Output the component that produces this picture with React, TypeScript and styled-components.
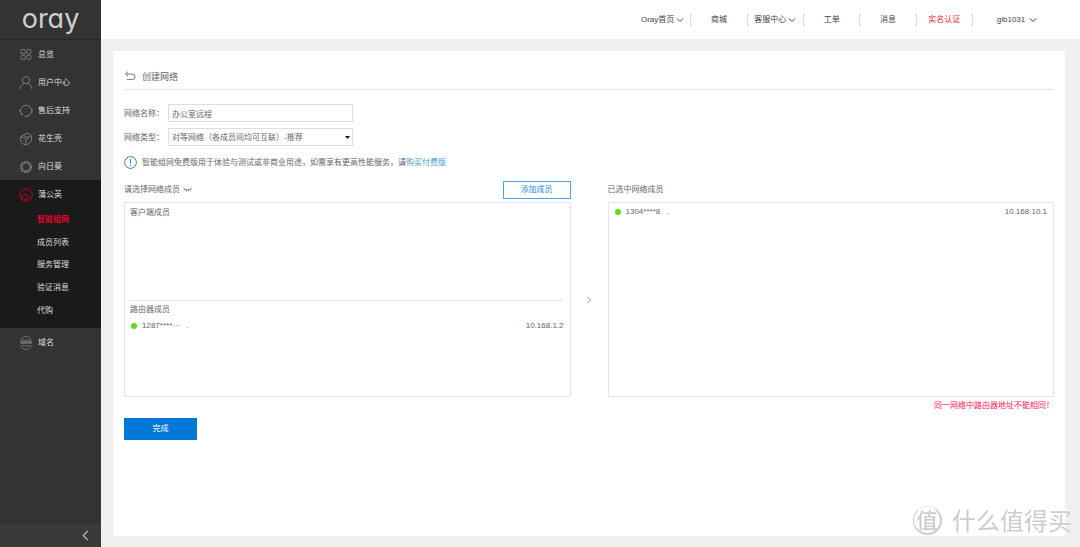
import React from 'react';
import styled, { createGlobalStyle } from 'styled-components';

const GlobalStyle = createGlobalStyle`
  * { box-sizing: border-box; }
  body {
    margin: 0;
    background: #f0f0f0;
    color: #666;
    font: 8px/12px "Liberation Sans", "Noto Sans CJK SC", sans-serif;
  }
  button, input, select { font: inherit; color: inherit; margin: 0; }
  a { color: inherit; text-decoration: none; }
  ul { list-style: none; margin: 0; padding: 0; }
  h1, h2, h3, p { margin: 0; font: inherit; }
  svg { display: block; flex: none; }
`;

const Shell = styled.div`
  display: flex;
  min-height: 100vh;
`;

const Sidebar = styled.aside`
  display: flex;
  flex-direction: column;
  flex: none;
  width: 101px;
  background: #333;
  color: #ddd;
`;

const Logo = styled.a`
  height: 40px;
  border-bottom: 1px solid #262626;
  text-align: center;
  font: 400 27px/38px Inter, sans-serif;
  font-feature-settings: "cv11";
  && { color: #d0d0d0; }
`;

const SideLink = styled.a`
  display: flex;
  align-items: center;
  gap: 5px;
  height: 28px;
  padding: 1px 0 0 19px;
`;

const ActiveGroup = styled.li`
  background: #1a1a1a;
  padding-bottom: 7px;
`;

const SubMenu = styled.ul`
  display: flex;
  flex-direction: column;
  height: 113px;
`;

const SubItem = styled.li<{ $active?: boolean }>`
  display: flex;
  flex: 1;
  align-items: center;
  padding: 2px 0 0 37px;
  color: ${(p) => (p.$active ? '#e0002d' : '#ddd')};
  font-weight: ${(p) => (p.$active ? 700 : 400)};
`;

const Collapse = styled.button`
  display: flex;
  align-items: center;
  justify-content: flex-end;
  height: 23px;
  margin-top: auto;
  padding: 0 11px;
  border: 0;
  background: #3a3a3a;
  && { color: #bbb; }
`;

const Main = styled.div`
  display: flex;
  flex: 1;
  flex-direction: column;
  min-width: 0;
`;

const Header = styled.header`
  display: flex;
  justify-content: flex-end;
  align-items: center;
  height: 39px;
  padding: 1px 19px 0 0;
  background: #fff;
  color: #444;
`;

const Nav = styled.nav`
  display: grid;
  grid-template-columns: repeat(6, 1fr);
  width: 338px;
`;

const NavLink = styled.a<{ $alert?: boolean }>`
  display: flex;
  align-items: center;
  justify-content: center;
  gap: 2px;
  height: 12px;
  border-right: 1px solid #ddd;
  white-space: nowrap;
  && { color: ${(p) => (p.$alert ? '#f5222d' : '#444')}; }
`;

const Account = styled.button`
  display: flex;
  align-items: center;
  justify-content: center;
  gap: 4px;
  width: 88px;
  height: 12px;
  padding: 0;
  border: 0;
  background: none;
`;

const Panel = styled.main`
  flex: 1;
  margin: 12px 15px 11px 12px;
  padding: 0 11px;
  background: #fff;
`;

const TitleBar = styled.div`
  display: flex;
  align-items: center;
  gap: 6px;
  height: 39px;
  padding-top: 13px;
  border-bottom: 1px solid #e6e6e6;
  font-size: 9px;
`;

const IconButton = styled.button`
  padding: 0;
  border: 0;
  background: none;
`;

const Form = styled.form`
  display: grid;
  gap: 6px;
  margin-top: 14px;
`;

const Field = styled.div`
  display: flex;
  align-items: center;
`;

const Label = styled.label`
  width: 44px;
  padding-top: 2px;
`;

const TextBox = styled.input`
  width: 185px;
  height: 18px;
  padding: 0 3px;
  border: 1px solid #ddd;
  background: #fff;
`;

const SelectWrap = styled.div`
  display: grid;
  align-items: center;
  width: 185px;
  & > * { grid-area: 1 / 1; }
  & > svg { justify-self: end; margin-right: 3px; pointer-events: none; }
`;

const Select = styled.select`
  appearance: none;
  width: 100%;
  height: 18px;
  padding: 1px 3px 0;
  border: 1px solid #ddd;
  border-radius: 0;
  background: #fff;
`;

const Notice = styled.p`
  display: flex;
  align-items: center;
  gap: 5px;
  margin-top: 10px;
`;

const BlueLink = styled.a`
  && { color: #4a98d9; }
`;

const Picker = styled.div`
  display: grid;
  grid-template-columns: 1fr 37px 1fr;
  margin-top: 11px;
`;

const ColumnHead = styled.div`
  display: flex;
  align-items: center;
  gap: 3px;
  height: 22px;
  padding-bottom: 3px;
`;

const AddButton = styled.button`
  width: 68px;
  height: 18px;
  margin-left: auto;
  padding: 0;
  border: 1px solid #4aa0e6;
  background: #fff;
  && { color: #2b8ade; }
`;

const Box = styled.div`
  height: 195px;
  border: 1px solid #e6e6e6;
  padding: 1px 6px 1px 5px;
`;

const Section = styled.section`
  & + & { border-top: 1px solid #e6e6e6; }
  &:first-child:not(:last-child) { height: 96px; }
`;

const SectionTitle = styled.h3`
  height: 17px;
  line-height: 17px;
`;

const Member = styled.div`
  display: flex;
  align-items: center;
  height: 16px;
  padding-left: 1px;
`;

const Dot = styled.span`
  width: 6px;
  height: 6px;
  margin-right: 5px;
  border-radius: 50%;
  background: #5fdb1f;
`;

const Masked = styled.span`
  margin-right: 6px;
  white-space: nowrap;
`;

const Address = styled.span`
  margin-left: auto;
`;

const Arrow = styled.div`
  display: flex;
  align-items: center;
  justify-content: center;
  padding-top: 7px;
  color: #999;
`;

const ErrorText = styled.p`
  margin-top: 3px;
  text-align: right;
  color: #ff1a55;
`;

const Submit = styled.button`
  display: block;
  width: 73px;
  height: 22px;
  margin-top: 6px;
  padding: 0;
  border: 1px solid #0078d7;
  background: #0078d7;
  && { color: #fff; }
`;

const Watermark = styled.div`
  position: fixed;
  right: 8px;
  bottom: 10px;
  display: flex;
  align-items: center;
  gap: 10px;
  color: #ccc;
  font: 24px/34px "Noto Sans CJK SC", sans-serif;
  text-shadow: -1px -1px 0 #fff;
  white-space: nowrap;
  pointer-events: none;
`;

const Seal = styled.span`
  width: 29px;
  height: 29px;
  border: 1px solid #ccc;
  border-right-width: 2px;
  border-bottom-width: 2px;
  border-top-color: #eee;
  border-radius: 50%;
  font-size: 21px;
  font-weight: 500;
  line-height: 24px;
  text-align: center;
`;

type ChevronProps = { dir?: 'down' | 'left' | 'right'; size?: number };

const chevrons = { down: 'M1 2.5 4 5.5 7 2.5', left: 'M6 0 2 4 6 8', right: 'M2.5 1 5.5 4 2.5 7' };

const Chevron = ({ dir = 'down', size = 8 }: ChevronProps) => (
  <svg width={size} height={size} viewBox="0 0 8 8" fill="none" stroke="currentColor" overflow="visible">
    <path d={chevrons[dir]} />
  </svg>
);

const Glyph = ({ children, color = '#808080' }: { children: React.ReactNode; color?: string }) => (
  <svg width="14" height="14" viewBox="0 0 14 14" fill="none" stroke={color} strokeWidth="0.9">
    {children}
  </svg>
);

const GridIcon = () => (
  <Glyph>
    <rect x="2" y="1.5" width="4.2" height="4.2" rx="1" />
    <rect x="7.7" y="1.5" width="4.2" height="4.2" rx="1" />
    <rect x="2" y="7.2" width="4.2" height="4.2" rx="1" />
    <rect x="7.7" y="7.2" width="4.2" height="4.2" rx="1" />
  </Glyph>
);

const UserIcon = () => (
  <Glyph>
    <circle cx="7" cy="4.2" r="3.6" />
    <path d="M1 13.2c0-3 2-5 4.2-5.8M13 13.2c0-3-2-5-4.2-5.8" />
  </Glyph>
);

const HeadsetIcon = () => (
  <Glyph>
    <path d="M1.8 5.2a5.4 5.4 0 0 1 10.4 0M12.4 8a5.6 5.6 0 0 1-4.2 4.2" />
    <path d="M1.3 5.1v3.4M12.8 4.8v3.6M3.6 11.2 2 9M5.8 12.4h2.6" strokeWidth="1.3" />
  </Glyph>
);

const CubeIcon = () => (
  <Glyph>
    <path d="M1.4 5 8 1.2Q12.4 2.2 12.7 5.2q.3 4.6-2.3 6.2L6.4 13Q1 11.6 1.4 5Z" />
    <path d="M1.4 5Q5 5.6 7.2 7.2L12.5 3.8M7.2 7.2 6.6 13M4.2 3.5 9.6 5.6" />
  </Glyph>
);

const SunflowerIcon = () => (
  <Glyph>
    <circle cx="7" cy="7" r="4" strokeWidth="0.8" />
    <circle cx="7" cy="7" r="5.3" strokeWidth="1.6" strokeDasharray="1.9 0.88" />
  </Glyph>
);

const DandelionIcon = () => (
  <Glyph color="#d8002d">
    <circle cx="7" cy="7" r="6.2" />
    <path d="M4.6 12.2A3 3 0 1 1 9 9.2c0 1.4-.9 2.2-2.2 2.2-1 0-1.6-.6-1.6-1.4" />
  </Glyph>
);

const DomainIcon = () => (
  <Glyph>
    <path d="M1.4 4.2a6 6 0 0 1 11.2 0M1.4 9.8a6 6 0 0 0 11.2 0M2 4.2h10M2 9.8h10" strokeWidth="0.7" />
    <text x="7" y="8.2" textAnchor="middle" fontSize="5" fontWeight="700" fill="#909090" stroke="none">www</text>
  </Glyph>
);

const sideItems = [
  { label: '总览', Icon: GridIcon },
  { label: '用户中心', Icon: UserIcon },
  { label: '售后支持', Icon: HeadsetIcon },
  { label: '花生壳', Icon: CubeIcon },
  { label: '向日葵', Icon: SunflowerIcon },
];

const subItems = ['智能组网', '成员列表', '服务管理', '验证消息', '代购'];

const navItems = [
  { label: 'Oray首页', menu: true },
  { label: '商城' },
  { label: '客服中心', menu: true },
  { label: '工单' },
  { label: '消息' },
  { label: '实名认证', alert: true },
];

export default function App() {
  return (
    <>
      <GlobalStyle />
      <Shell>
        <Sidebar>
          <Logo href="#">oray</Logo>
          <ul>
            {sideItems.map(({ label, Icon }) => (
              <li key={label}>
                <SideLink href="#"><Icon />{label}</SideLink>
              </li>
            ))}
            <ActiveGroup>
              <SideLink href="#"><DandelionIcon />蒲公英</SideLink>
              <SubMenu>
                {subItems.map((label, i) => (
                  <SubItem key={label} $active={i === 0}><a href="#">{label}</a></SubItem>
                ))}
              </SubMenu>
            </ActiveGroup>
            <li><SideLink href="#"><DomainIcon />域名</SideLink></li>
          </ul>
          <Collapse aria-label="收起"><Chevron dir="left" size={9} /></Collapse>
        </Sidebar>
        <Main>
          <Header>
            <Nav>
              {navItems.map(({ label, menu, alert }) => (
                <NavLink key={label} href="#" $alert={alert}>
                  {label}{menu && <Chevron />}
                </NavLink>
              ))}
            </Nav>
            <Account>glb1031<Chevron /></Account>
          </Header>
          <Panel>
            <TitleBar>
              <IconButton aria-label="返回">
                <svg width="12" height="12" viewBox="0 0 12 12" fill="none" stroke="#777" strokeWidth="1">
                  <path d="M2 3h6.2a2.8 2.8 0 0 1 0 5.6H3" />
                  <path d="M4 .6 1.5 3 4 5.4" />
                </svg>
              </IconButton>
              <h1>创建网络</h1>
            </TitleBar>
            <Form>
              <Field>
                <Label htmlFor="name">网络名称：</Label>
                <TextBox id="name" defaultValue="办公室远程" />
              </Field>
              <Field>
                <Label htmlFor="type">网络类型：</Label>
                <SelectWrap>
                  <Select id="type">
                    <option>对等网络（各成员间均可互联）-推荐</option>
                  </Select>
                  <svg width="5" height="3" viewBox="0 0 5 3"><path d="M0 0h5L2.5 3Z" fill="#111" /></svg>
                </SelectWrap>
              </Field>
            </Form>
            <Notice>
              <svg width="13" height="13" viewBox="0 0 13 13" fill="none" stroke="#3f7fcf">
                <circle cx="6.5" cy="6.5" r="5.9" />
                <path d="M6.5 3v4.5M6.5 8.7v1.2" />
              </svg>
              <span>智能组网免费版用于体验与测试或非商业用途，如需享有更高性能服务，请<BlueLink href="#">购买付费版</BlueLink></span>
            </Notice>
            <Picker>
              <div>
                <ColumnHead>
                  <h2>请选择网络成员</h2>
                  <IconButton aria-label="隐藏">
                    <svg width="9" height="5" viewBox="0 0 9 5" fill="none" stroke="#666" strokeWidth="0.8">
                      <path d="M.5 1Q4.5 5 8.5 1M1.6 2 .8 3.4M3.6 2.9 3.2 4.5M5.4 2.9l.4 1.6M7.4 2l.8 1.4" />
                    </svg>
                  </IconButton>
                  <AddButton>添加成员</AddButton>
                </ColumnHead>
                <Box>
                  <Section>
                    <SectionTitle>客户端成员</SectionTitle>
                  </Section>
                  <Section>
                    <SectionTitle>路由器成员</SectionTitle>
                    <Member>
                      <Dot /><Masked>1287****···</Masked>.
                      <Address>10.168.1.2</Address>
                    </Member>
                  </Section>
                </Box>
              </div>
              <Arrow><Chevron dir="right" /></Arrow>
              <div>
                <ColumnHead><h2>已选中网络成员</h2></ColumnHead>
                <Box>
                  <Section>
                    <Member>
                      <Dot /><Masked>1304****8</Masked>.
                      <Address>10.168.10.1</Address>
                    </Member>
                  </Section>
                </Box>
                <ErrorText>同一网络中路由器地址不能相同！</ErrorText>
              </div>
            </Picker>
            <Submit>完成</Submit>
          </Panel>
        </Main>
      </Shell>
      <Watermark><Seal>值</Seal>什么值得买</Watermark>
    </>
  );
}
